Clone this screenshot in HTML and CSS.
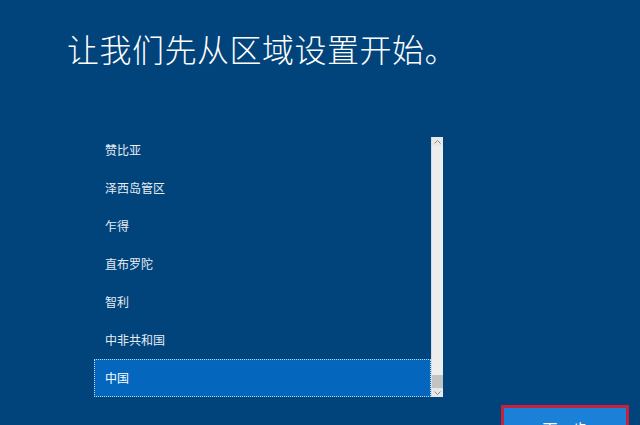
FILE: index.html
```html
<!DOCTYPE html>
<html lang="zh-CN">
<head>
<meta charset="utf-8">
<title>区域设置</title>
<link rel="stylesheet" href="styles.css">
</head>
<body>
<main class="page">
  <h1 class="title">让我们先从区域设置开始。</h1>
  <div class="listbox">
    <ul class="items">
      <li class="item">赞比亚</li>
      <li class="item">泽西岛管区</li>
      <li class="item">乍得</li>
      <li class="item">直布罗陀</li>
      <li class="item">智利</li>
      <li class="item">中非共和国</li>
      <li class="item selected">中国</li>
    </ul>
    <div class="scrollbar">
      <div class="arrow">
        <svg width="7" height="4" viewBox="0 0 7 4"><path d="M0.5 3.5 L3.5 0.5 L6.5 3.5" fill="none" stroke="#8a8a8a" stroke-width="1"/></svg>
      </div>
      <div class="track"><div class="thumb"></div></div>
      <div class="arrow">
        <svg width="7" height="4" viewBox="0 0 7 4"><path d="M0.5 0.5 L3.5 3.5 L6.5 0.5" fill="none" stroke="#8a8a8a" stroke-width="1"/></svg>
      </div>
    </div>
  </div>
  <div class="footer">
    <button class="next">下一步</button>
  </div>
</main>
</body>
</html>
```
FILE: styles.css
```css
html, body {
  margin: 0;
  padding: 0;
  height: 425px;
  overflow: hidden;
  background: #01437b;
}
.page {
  padding: 26px 0 0 67px;
  font-family: "Noto Sans CJK SC", "Noto Sans", sans-serif;
  color: #ffffff;
}
.title {
  margin: 0;
  font-size: 32px;
  line-height: 44px;
  font-weight: 300;
  letter-spacing: 0.5px;
}
.listbox {
  margin-top: 61px;
  margin-left: 27px;
  width: 349px;
  height: 266px;
  display: flex;
}
.items {
  list-style: none;
  margin: 0;
  padding: 0;
  flex: 1;
}
.item {
  height: 38px;
  line-height: 38px;
  padding-left: 11px;
  font-size: 12px;
  color: #e6edf5;
  box-sizing: border-box;
}
.item.selected {
  background: #0566be;
  border: 1px dotted rgba(255,255,255,0.75);
  line-height: 36px;
  padding-left: 10px;
  color: #ffffff;
}
.scrollbar {
  width: 12px;
  display: flex;
  flex-direction: column;
  background: #e8e8e8;
  border-left: 1px solid #d6dbe0;
  box-sizing: border-box;
  margin-top: 6px;
}
.arrow {
  height: 9px;
  display: flex;
  align-items: center;
  justify-content: center;
}
.track {
  flex: 1;
  display: flex;
  flex-direction: column;
  justify-content: flex-end;
  background: #ededed;
}
.thumb {
  height: 13px;
  background: #c3c3c3;
}
.footer {
  display: flex;
  justify-content: flex-end;
  padding-right: 11px;
  margin-top: 8px;
}
.next {
  width: 128px;
  height: 40px;
  border: 3px solid #c6203c;
  background: #1b80d8;
  color: #ffffff;
  font-family: "Noto Sans CJK SC", "Noto Sans", sans-serif;
  font-size: 15px;
  line-height: 20px;
  padding: 11px 0 0 0;
  text-align: center;
  display: flex;
  justify-content: center;
  align-items: flex-start;
}
```
